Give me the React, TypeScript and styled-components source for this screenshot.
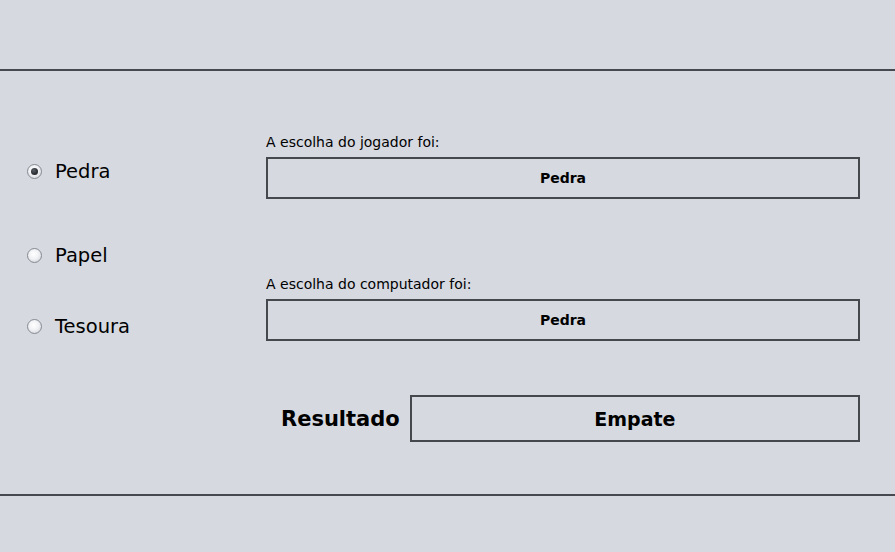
import { useState } from "react";
import styled, { createGlobalStyle } from "styled-components";

const GlobalStyle = createGlobalStyle`
  html, body {
    margin: 0;
    padding: 0;
    background: #d6d9e0;
  }
  body {
    font-family: "DejaVu Sans", "Liberation Sans", sans-serif;
    color: #000;
  }
`;

const Page = styled.div`
  width: 895px;
  height: 552px;
  display: flex;
  flex-direction: column;
  background: #d6d9e0;
`;

const Band = styled.div<{ $height: number }>`
  height: ${(p) => p.$height}px;
  flex-shrink: 0;
`;

const Rule = styled.div`
  height: 2px;
  background: #464a50;
  flex-shrink: 0;
`;

const Main = styled.div`
  height: 423px;
  display: flex;
`;

const LeftCol = styled.div`
  width: 266px;
  padding-left: 27px;
  box-sizing: border-box;
  display: flex;
  flex-direction: column;
`;

const RadioItem = styled.label<{ $top: number }>`
  margin-top: ${(p) => p.$top}px;
  height: 24px;
  display: flex;
  align-items: center;
  gap: 13px;
  font-size: 19.5px;
  cursor: pointer;
`;

const RadioDot = styled.span<{ $checked: boolean }>`
  width: 15px;
  height: 15px;
  border-radius: 50%;
  box-sizing: border-box;
  border: 1px solid #868a92;
  background: radial-gradient(circle at 45% 40%, #ffffff 0%, #f1f2f5 45%, #c6cad1 100%);
  display: flex;
  align-items: center;
  justify-content: center;
  &::after {
    content: "";
    width: 7px;
    height: 7px;
    border-radius: 50%;
    background: radial-gradient(circle at 40% 35%, #5a5f66 0%, #23262a 70%);
    display: ${(p) => (p.$checked ? "block" : "none")};
  }
`;

const RightCol = styled.div`
  width: 594px;
  display: flex;
  flex-direction: column;
`;

const Caption = styled.div<{ $top: number }>`
  margin-top: ${(p) => p.$top}px;
  font-size: 14px;
  line-height: 18px;
  height: 18px;
`;

const ValueBox = styled.div`
  margin-top: 6px;
  height: 42px;
  box-sizing: border-box;
  border: 2px solid #45484d;
  display: flex;
  align-items: center;
  justify-content: center;
  font-size: 14px;
  font-weight: bold;
`;

const ResultRow = styled.div`
  margin-top: 54px;
  display: flex;
  align-items: center;
  padding-left: 15px;
  gap: 10px;
`;

const ResultLabel = styled.div`
  font-size: 21px;
  font-weight: bold;
`;

const ResultBox = styled.div`
  flex: 1;
  height: 47px;
  box-sizing: border-box;
  border: 2px solid #45484d;
  display: flex;
  align-items: center;
  justify-content: center;
  font-size: 19px;
  font-weight: bold;
`;

const options = [
  { name: "Pedra", top: 88 },
  { name: "Papel", top: 60 },
  { name: "Tesoura", top: 47 },
];

export default function App() {
  const [choice, setChoice] = useState("Pedra");
  return (
    <Page>
      <GlobalStyle />
      <Band $height={69} />
      <Rule />
      <Main>
        <LeftCol>
          {options.map((o) => (
            <RadioItem key={o.name} $top={o.top} onClick={() => setChoice(o.name)}>
              <RadioDot $checked={choice === o.name} />
              {o.name}
            </RadioItem>
          ))}
        </LeftCol>
        <RightCol>
          <Caption $top={62}>A escolha do jogador foi:</Caption>
          <ValueBox>{choice}</ValueBox>
          <Caption $top={76}>A escolha do computador foi:</Caption>
          <ValueBox>Pedra</ValueBox>
          <ResultRow>
            <ResultLabel>Resultado</ResultLabel>
            <ResultBox>Empate</ResultBox>
          </ResultRow>
        </RightCol>
      </Main>
      <Rule />
    </Page>
  );
}
